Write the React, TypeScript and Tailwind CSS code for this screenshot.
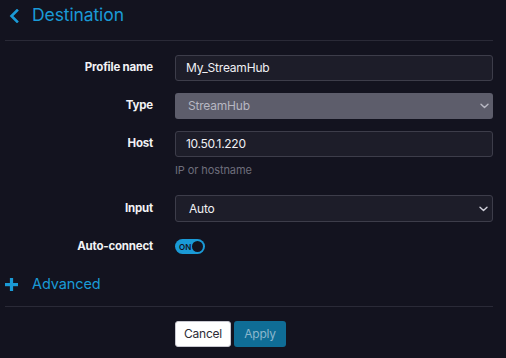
import React from "react";

function Chevron({ className }: { className?: string }) {
  return (
    <svg width="9" height="6" viewBox="0 0 9 6" className={className} fill="none">
      <path d="M1 1.2 L4.5 4.6 L8 1.2" stroke="currentColor" strokeWidth="1.4" strokeLinecap="round" strokeLinejoin="round" />
    </svg>
  );
}

function Label({ children }: { children: React.ReactNode }) {
  return (
    <div className="w-[148px] text-right text-[11.5px] font-bold text-[#f2f2f5] tracking-[-0.2px] leading-none">
      {children}
    </div>
  );
}

export default function App() {
  return (
    <div
      className="w-[506px] h-[358px] bg-[#13131f] overflow-hidden pl-[5px] pr-[13px]"
      style={{ fontFamily: "Inter, 'Open Sans', sans-serif" }}
    >
      {/* Header */}
      <div className="h-[41px] pb-[9px] border-b border-[#2a2a37] flex items-center">
        <svg width="12" height="14" viewBox="0 0 12 14" className="ml-[3px] text-[#1a9ad6]" fill="none">
          <path d="M9 1.5 L3.5 7 L9 12.5" stroke="currentColor" strokeWidth="2.6" strokeLinecap="square" />
        </svg>
        <div className="ml-[12px] text-[17.5px] text-[#1a9ad6] leading-none -mt-[2px] tracking-[-0.1px]">Destination</div>
      </div>

      {/* Form */}
      <div className="pt-[14px] flex flex-col">
        <div className="flex items-center gap-[22px]">
          <Label>Profile name</Label>
          <div className="flex-1 h-[26px] rounded-[3px] border border-[#3d3d4a] bg-[#1d1d29] flex items-center px-[10px] text-[12px] text-[#f0f0f4] tracking-[-0.2px]">
            My_StreamHub
          </div>
        </div>

        <div className="flex items-center gap-[22px] mt-[12px]">
          <Label>Type</Label>
          <div className="flex-1 h-[26px] rounded-[3px] bg-[#5d5d6b] flex items-center justify-between pl-[13px] pr-[4px] text-[12px] text-[#b7b7c2] tracking-[-0.2px]">
            <span>StreamHub</span>
            <Chevron className="text-[#b9b9c4]" />
          </div>
        </div>

        <div className="flex items-center gap-[22px] mt-[12px]">
          <Label>Host</Label>
          <div className="flex-1 h-[26px] rounded-[3px] border border-[#3d3d4a] bg-[#1d1d29] flex items-center px-[10px] text-[12px] text-[#f0f0f4] tracking-[-0.3px]">
            10.50.1.220
          </div>
        </div>
        <div className="ml-[170px] mt-[7px] text-[11px] text-[#6e6e7c] leading-[12px] tracking-[-0.1px]">IP or hostname</div>

        <div className="flex items-center gap-[22px] mt-[19px]">
          <Label>Input</Label>
          <div className="flex-1 h-[27px] rounded-[3px] border border-[#3d3d4a] bg-[#1d1d29] flex items-center justify-between pl-[13px] pr-[4px] text-[12px] text-[#f0f0f4] tracking-[-0.2px]">
            <span>Auto</span>
            <Chevron className="text-[#d0d0da]" />
          </div>
        </div>

        <div className="flex items-center gap-[22px] mt-[17px]">
          <Label>Auto-connect</Label>
          <div className="w-[30px] h-[15px] rounded-full bg-[#1a9ad6] flex items-center justify-between pl-[4px] pr-[2px]">
            <span className="text-[8px] font-semibold text-[#13131f] leading-none">ON</span>
            <span className="w-[11px] h-[11px] rounded-full bg-[#13131f]" />
          </div>
        </div>

        <div className="flex items-center mt-[20px] h-[20px]">
          <svg width="13" height="13" viewBox="0 0 13 13" className="text-[#1a9ad6]">
            <rect x="0" y="5" width="13" height="3.2" fill="currentColor" />
            <rect x="4.9" y="0" width="3.2" height="13" fill="currentColor" />
          </svg>
          <span className="ml-[14px] text-[14.5px] text-[#1a9ad6] leading-none tracking-[-0.1px]">Advanced</span>
        </div>

        <div className="mt-[12px] border-t border-[#2a2a37]" />

        <div className="flex gap-[3px] ml-[170px] mt-[14px]">
          <div className="w-[56px] h-[26px] rounded-[3px] bg-white border border-[#c8c8d0] flex items-center justify-center text-[12px] text-[#2b2b35] tracking-[-0.2px]">
            Cancel
          </div>
          <div className="w-[52px] h-[26px] rounded-[3px] bg-[#0f6d96] flex items-center justify-center text-[12px] text-[#8ab7cd] tracking-[-0.2px]">
            Apply
          </div>
        </div>
      </div>
    </div>
  );
}
